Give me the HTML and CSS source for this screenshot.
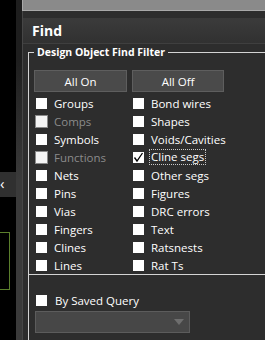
FILE: index.html
```html
<!DOCTYPE html>
<html>
  <head>
    <meta charset="utf-8">
    <meta name="viewport" content="width=device-width, initial-scale=1">
    <title>Find</title>
    <link rel="stylesheet" href="styles.css">
  </head>
  <body>
    <div class="screen">
      <div class="side">
        <div class="side-tab">&lsaquo;</div>
        <div class="side-box"></div>
      </div>
      <div class="gutter"></div>
      <div class="panel">
        <div class="topbar"></div>
        <div class="title">Find</div>
        <div class="content">
          <fieldset class="filter">
            <legend>Design Object Find Filter</legend>
            <div class="buttons">
              <button class="btn">All On</button>
              <button class="btn">All Off</button>
            </div>
            <div class="grid">
              <label class="check"><span class="box"></span>Groups</label>
              <label class="check"><span class="box"></span>Bond wires</label>
              <label class="check off"><span class="box"></span>Comps</label>
              <label class="check"><span class="box"></span>Shapes</label>
              <label class="check"><span class="box"></span>Symbols</label>
              <label class="check"><span class="box"></span>Voids/Cavities</label>
              <label class="check off"><span class="box"></span>Functions</label>
              <label class="check on"><span class="box"><svg width="11" height="11" viewBox="0 0 11 11"><polyline points="1.5,5.5 4,9 9.5,1" fill="none" stroke="#000" stroke-width="1.3"/></svg></span><span class="focus">Cline segs</span></label>
              <label class="check"><span class="box"></span>Nets</label>
              <label class="check"><span class="box"></span>Other segs</label>
              <label class="check"><span class="box"></span>Pins</label>
              <label class="check"><span class="box"></span>Figures</label>
              <label class="check"><span class="box"></span>Vias</label>
              <label class="check"><span class="box"></span>DRC errors</label>
              <label class="check"><span class="box"></span>Fingers</label>
              <label class="check"><span class="box"></span>Text</label>
              <label class="check"><span class="box"></span>Clines</label>
              <label class="check"><span class="box"></span>Ratsnests</label>
              <label class="check"><span class="box"></span>Lines</label>
              <label class="check"><span class="box"></span>Rat Ts</label>
            </div>
          </fieldset>
          <div class="query">
            <label class="check"><span class="box"></span>By Saved Query</label>
            <div class="select"><span class="arrow"></span></div>
          </div>
        </div>
      </div>
    </div>
  </body>
</html>
```

FILE: styles.css
```css
body {
  margin: 0;
  background: #000;
  font-family: "Open Sans", "Noto Sans", sans-serif;
  color: #fff;
}

.screen {
  width: 265px;
  height: 340px;
  display: flex;
  overflow: hidden;
}

.side {
  width: 16px;
  flex: none;
  display: flex;
  flex-direction: column;
  background: #000;
}

.side-tab {
  margin-top: 172px;
  height: 25px;
  background: #303030;
  font-size: 15px;
  line-height: 22px;
  color: #fff;
}

.side-box {
  margin-top: 35px;
  width: 9px;
  height: 56px;
  border: 1px solid #5b7f2c;
  border-left: none;
}

.gutter {
  width: 6px;
  flex: none;
  background: linear-gradient(#1e1e1e, #1e1e1e 60px, #3a3a3a 180px);
}

.panel {
  flex: 1;
  display: flex;
  flex-direction: column;
  background: #2d2d2d;
  border-left: 1px solid #464646;
}

.topbar {
  height: 10px;
  background: #8a8a8a;
  border-bottom: 1px solid #a9a9a9;
  margin-left: -1px;
  border-left: 1px solid #a9a9a9;
}

.title {
  margin-top: 7px;
  height: 25px;
  padding-left: 9px;
  font-weight: bold;
  font-size: 14px;
  line-height: 26px;
  background: linear-gradient(#3b3b3b, #313131);
  border-bottom: 1px solid #3f3f3f;
}

.content {
  flex: 1;
  display: flex;
  flex-direction: column;
  padding-left: 5px;
}

.filter {
  margin: 0;
  padding: 10px 0 0 5px;
  border: 1px solid #d4d4d4;
  border-bottom: none;
  border-right: none;
  min-width: 0;
  width: 300px;
}

.filter legend {
  padding: 0 3px;
  font-size: 10.5px;
  font-weight: bold;
  line-height: 16px;
}

.buttons {
  display: flex;
  gap: 5px;
}

.btn {
  width: 93px;
  height: 22px;
  padding: 0;
  background: #4a4a4a;
  border: 1px solid #5e5e5e;
  color: #fff;
  font-family: inherit;
  font-size: 11.5px;
}

.btn + .btn {
  width: 92px;
}

.grid {
  margin-top: 2px;
  display: grid;
  grid-template-columns: 97px 1fr;
  grid-auto-rows: 18px;
}

.check {
  display: flex;
  align-items: center;
  font-size: 11.5px;
  white-space: nowrap;
}

.box {
  width: 11px;
  height: 11px;
  margin: 0 7px 0 2px;
  background: #fff;
  flex: none;
  display: flex;
}

.off {
  color: #8b8b8b;
}

.off .box {
  width: 11px;
  height: 11px;
  margin: 0 6px 0 1px;
  background: #f5f5f5;
  border: 1px solid #8a8a8a;
}

.focus {
  outline: 1px dotted #c8c8c8;
  padding: 0 1px;
  margin-left: -1px;
  line-height: 14px;
}

.query {
  flex: 1;
  border-top: 1px solid #d4d4d4;
  border-left: 1px solid #d4d4d4;
  padding: 16px 0 0 6px;
}

.query .check {
  height: 18px;
}

.query .box {
  margin: 0 8px 0 1px;
}

.select {
  margin-top: 2px;
  width: 153px;
  height: 20px;
  background: #474747;
  border: 1px solid #5c5c5c;
  display: flex;
  justify-content: flex-end;
  align-items: center;
}

.arrow {
  width: 0;
  height: 0;
  margin-right: 5px;
  border-left: 5px solid transparent;
  border-right: 5px solid transparent;
  border-top: 6px solid #6e6e6e;
}
```
